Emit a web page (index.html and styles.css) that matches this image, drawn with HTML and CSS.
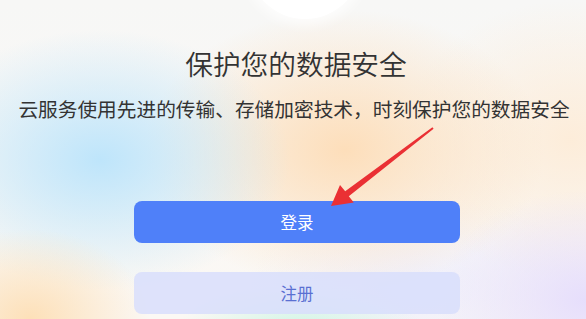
FILE: index.html
```html
<!DOCTYPE html>
<html lang="zh-CN">
<head>
<meta charset="utf-8">
<link rel="stylesheet" href="styles.css">
</head>
<body>
<div class="page">
  <div class="glow"></div>
  <div class="content">
    <h1 class="title">保护您的数据安全</h1>
    <p class="subtitle">云服务使用先进的传输、存储加密技术，时刻保护您的数据安全</p>
    <div class="actions">
      <button class="btn btn-primary">登录</button>
      <button class="btn btn-secondary">注册</button>
    </div>
  </div>
  <svg class="arrow" width="586" height="319" viewBox="0 0 586 319" xmlns="http://www.w3.org/2000/svg">
    <polygon points="331,206 340,185 345.2,191.3 432.4,127.3 433.6,128.7 348.8,196.2 353.8,202.6" fill="#ea3034"/>
  </svg>
</div>
</body>
</html>
```
FILE: styles.css
```css
html, body {
  margin: 0;
  padding: 0;
}
body {
  width: 586px;
  height: 319px;
  overflow: hidden;
  font-family: "Noto Sans CJK SC", "Noto Sans", sans-serif;
}
.page {
  position: relative;
  width: 586px;
  height: 319px;
  overflow: hidden;
  background-color: #fbf9f6;
  background-image:
    radial-gradient(ellipse 120px 90px at 30px 319px, rgba(253, 224, 184, 1), rgba(253, 224, 184, 0) 100%),
    radial-gradient(ellipse 150px 110px at 586px 300px, rgba(230, 222, 252, 1), rgba(230, 222, 252, 0) 100%),
    radial-gradient(ellipse 120px 40px at 300px 325px, rgba(210, 246, 230, 0.95), rgba(210, 246, 230, 0) 100%),
    radial-gradient(ellipse 190px 130px at 100px 160px, rgba(190, 229, 251, 1), rgba(190, 229, 251, 0) 100%),
    radial-gradient(ellipse 200px 140px at 345px 150px, rgba(253, 222, 186, 1), rgba(253, 222, 186, 0) 100%),
    radial-gradient(ellipse 170px 140px at 570px 140px, rgba(253, 236, 216, 0.95), rgba(253, 236, 216, 0) 100%),
    radial-gradient(ellipse 170px 90px at 420px 285px, rgba(238, 238, 252, 0.9), rgba(238, 238, 252, 0) 100%),
    linear-gradient(180deg, #f7f7f6 0%, #fbf8f4 100%);
}
.glow {
  position: absolute;
  left: 248px;
  top: -95px;
  width: 114px;
  height: 114px;
  border-radius: 50%;
  background: #ffffff;
  box-shadow: 0 0 12px 6px rgba(255, 255, 255, 0.7);
}
.content {
  position: relative;
  display: flex;
  flex-direction: column;
  align-items: center;
  padding-top: 49px;
}
.title {
  margin: 0;
  padding-left: 6px;
  font-size: 27.7px;
  line-height: 28px;
  font-weight: 350;
  color: #333333;
}
.subtitle {
  margin: 22px 0 0 0;
  padding-left: 2px;
  font-size: 19.7px;
  line-height: 20px;
  font-weight: 400;
  color: #333333;
  white-space: nowrap;
}
.actions {
  margin-top: 82px;
  padding-left: 8px;
  display: flex;
  flex-direction: column;
  gap: 29px;
}
.btn {
  width: 326px;
  height: 42px;
  border: none;
  border-radius: 8px;
  font-family: "Noto Sans CJK SC", "Noto Sans", sans-serif;
  font-size: 16.5px;
  padding: 0;
}
.btn-primary {
  background: #4f80f9;
  color: #ffffff;
}
.btn-secondary {
  background: rgba(216, 222, 251, 0.85);
  color: #5a70d2;
}
.arrow {
  position: absolute;
  left: 0;
  top: 0;
}
```
